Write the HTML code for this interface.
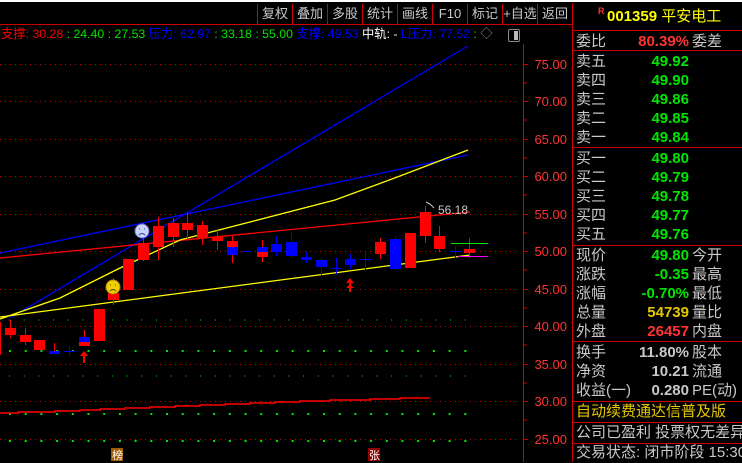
<!DOCTYPE html>
<html><head><meta charset="utf-8"><style>
body{margin:0;background:#000;width:742px;height:462px;overflow:hidden;position:relative;font-family:"Liberation Sans","Noto Sans CJK SC",sans-serif}
.a{position:absolute;white-space:nowrap}
.btn{position:absolute;top:4px;height:20px;width:34px;border-left:1px solid #c00;color:#c8c8c8;font-size:13px;line-height:20px;text-align:center}
.r{position:absolute;left:576px;width:166px;height:19px;font-size:15px;line-height:19px;color:#c8c8c8;white-space:nowrap;overflow:hidden}
.r .l{position:absolute;left:0}
.r .v{position:absolute;right:53px;font-weight:bold;font-family:"Liberation Sans","Noto Sans CJK SC",sans-serif;font-size:15px}
.r .l2{position:absolute;left:116px}
.hl{position:absolute;left:573px;width:169px;height:1px;background:#c00}
.g{color:#00e600}.rd{color:#ff3333}.y{color:#e6c800}
</style></head><body>
<svg width="742" height="462" style="position:absolute;left:0;top:0">
<rect x="0" y="0" width="742" height="2" fill="#fff"/>
<line x1="0" y1="24.5" x2="573" y2="24.5" stroke="#c00"/>
<line x1="572.5" y1="3" x2="572.5" y2="462" stroke="#c00"/>
<line x1="523.5" y1="44" x2="523.5" y2="462" stroke="#c00"/>
<g stroke="#c00" stroke-dasharray="1,4">
<line x1="0" y1="64.5" x2="520" y2="64.5"/><line x1="0" y1="101.5" x2="520" y2="101.5"/><line x1="0" y1="139.5" x2="520" y2="139.5"/><line x1="0" y1="176.5" x2="520" y2="176.5"/><line x1="0" y1="214.5" x2="520" y2="214.5"/><line x1="0" y1="251.5" x2="520" y2="251.5"/><line x1="0" y1="289.5" x2="520" y2="289.5"/><line x1="0" y1="326.5" x2="520" y2="326.5"/><line x1="0" y1="364.5" x2="520" y2="364.5"/><line x1="0" y1="401.5" x2="520" y2="401.5"/><line x1="0" y1="439.5" x2="520" y2="439.5"/>
</g>
<g stroke="#c00">
<line x1="523" y1="64.5" x2="528" y2="64.5"/><line x1="523" y1="83" x2="527" y2="83"/><line x1="523" y1="101.5" x2="528" y2="101.5"/><line x1="523" y1="120" x2="527" y2="120"/><line x1="523" y1="139.5" x2="528" y2="139.5"/><line x1="523" y1="158" x2="527" y2="158"/><line x1="523" y1="176.5" x2="528" y2="176.5"/><line x1="523" y1="195" x2="527" y2="195"/><line x1="523" y1="214.5" x2="528" y2="214.5"/><line x1="523" y1="233" x2="527" y2="233"/><line x1="523" y1="251.5" x2="528" y2="251.5"/><line x1="523" y1="270" x2="527" y2="270"/><line x1="523" y1="289.5" x2="528" y2="289.5"/><line x1="523" y1="308" x2="527" y2="308"/><line x1="523" y1="326.5" x2="528" y2="326.5"/><line x1="523" y1="345" x2="527" y2="345"/><line x1="523" y1="364.5" x2="528" y2="364.5"/><line x1="523" y1="383" x2="527" y2="383"/><line x1="523" y1="401.5" x2="528" y2="401.5"/><line x1="523" y1="420" x2="527" y2="420"/><line x1="523" y1="439.5" x2="528" y2="439.5"/>
</g>
<g fill="#ff3333" font-size="13" font-family="Liberation Sans,sans-serif" text-anchor="end">
<text x="567" y="69">75.00</text><text x="567" y="106">70.00</text><text x="567" y="144">65.00</text><text x="567" y="181">60.00</text><text x="567" y="219">55.00</text><text x="567" y="256">50.00</text><text x="567" y="294">45.00</text><text x="567" y="331">40.00</text><text x="567" y="369">35.00</text><text x="567" y="406">30.00</text><text x="567" y="444">25.00</text>
</g>
<g stroke="#00e600" stroke-width="2">
<line x1="9" y1="320" x2="470" y2="320" stroke-dasharray="1,13.7" stroke-width="1"/>
<line x1="9" y1="351" x2="470" y2="351" stroke-dasharray="2,13.7" stroke-width="2"/>
<line x1="9" y1="376" x2="470" y2="376" stroke-dasharray="1,13.7" stroke-width="1"/>
<line x1="9" y1="414" x2="470" y2="414" stroke-dasharray="2,13.7" stroke-width="2"/>
<line x1="9" y1="441" x2="470" y2="441" stroke-dasharray="2,13.7" stroke-width="2"/>
</g>
<polyline fill="none" stroke="#f00" stroke-width="1.5" points="0,413 18,413 18,412 55,412 55,411 80,411 80,410 100,410 100,409 125,409 125,408 150,408 150,407 175,407 175,406 200,406 200,405 225,405 225,404 250,404 250,403 275,403 275,402 300,402 300,401 330,401 330,400 370,400 370,399 400,399 400,398 430,398"/>
<line x1="10" y1="318" x2="468" y2="46" stroke="#0000ff" stroke-width="1.3"/>
<line x1="0" y1="253" x2="468" y2="155" stroke="#0000ff" stroke-width="1.3"/>
<line x1="0" y1="258" x2="470" y2="212" stroke="#f00" stroke-width="1.3"/>
<polyline fill="none" stroke="#ffff00" stroke-width="1.3" points="0,319 60,298 120,268 180,240 250,222 335,200 400,176 468,150"/>
<line x1="0" y1="317" x2="470" y2="255" stroke="#ffff00" stroke-width="1.3"/>
<g fill="#f00" stroke="#f00">
<line x1="0.5" y1="322" x2="0.5" y2="355"/>
<line x1="10.5" y1="320" x2="10.5" y2="338"/><rect x="5" y="328" width="11" height="7" stroke="none"/>
<line x1="25.5" y1="328" x2="25.5" y2="345"/><rect x="20" y="335" width="11" height="7" stroke="none"/>
<rect x="34" y="340" width="11" height="10" stroke="none"/>
<line x1="54.5" y1="343" x2="54.5" y2="354"/>
<line x1="84.5" y1="330" x2="84.5" y2="346"/><rect x="79" y="342" width="11" height="4" stroke="none"/>
<rect x="94" y="309" width="11" height="32" stroke="none"/>
<line x1="113.5" y1="278" x2="113.5" y2="305"/><rect x="108" y="293" width="11" height="7" stroke="none"/>
<rect x="123" y="259" width="11" height="31" stroke="none"/>
<line x1="143.5" y1="223" x2="143.5" y2="261"/><rect x="138" y="243" width="11" height="17" stroke="none"/>
<line x1="158.5" y1="217" x2="158.5" y2="260"/><rect x="153" y="226" width="11" height="21" stroke="none"/>
<line x1="173.5" y1="218" x2="173.5" y2="247"/><rect x="168" y="223" width="11" height="14" stroke="none"/>
<line x1="187.5" y1="213" x2="187.5" y2="241"/><rect x="182" y="223" width="11" height="7" stroke="none"/>
<line x1="202.5" y1="221" x2="202.5" y2="245"/><rect x="197" y="225" width="11" height="13" stroke="none"/>
<line x1="217.5" y1="230" x2="217.5" y2="250"/><rect x="212" y="237" width="11" height="4" stroke="none"/>
<line x1="232.5" y1="236" x2="232.5" y2="263"/><rect x="227" y="241" width="11" height="6" stroke="none"/>
<line x1="262.5" y1="240" x2="262.5" y2="262"/><rect x="257" y="252" width="11" height="5" stroke="none"/>
<line x1="380.5" y1="238" x2="380.5" y2="259"/><rect x="375" y="242" width="11" height="12" stroke="none"/>
<rect x="405" y="233" width="11" height="35" stroke="none"/>
<line x1="425.5" y1="206" x2="425.5" y2="243"/><rect x="420" y="212" width="11" height="24" stroke="none"/>
<line x1="439.5" y1="226" x2="439.5" y2="252"/><rect x="434" y="236" width="11" height="13" stroke="none"/>
<line x1="469.5" y1="238" x2="469.5" y2="258"/><rect x="464" y="249" width="11" height="4" stroke="none"/>
</g>
<g fill="#0000ff" stroke="#0000ff">
<rect x="49" y="351" width="11" height="3" stroke="none"/>
<line x1="64" y1="351.5" x2="75" y2="351.5"/><line x1="69.5" y1="346" x2="69.5" y2="356"/>
<rect x="79" y="337" width="11" height="5" stroke="none"/>
<rect x="227" y="247" width="11" height="8" stroke="none"/>
<line x1="242" y1="251.5" x2="251" y2="251.5"/>
<rect x="257" y="247" width="11" height="5" stroke="none"/>
<line x1="276.5" y1="236" x2="276.5" y2="256"/><rect x="271" y="244" width="11" height="8" stroke="none"/>
<line x1="291.5" y1="232" x2="291.5" y2="258"/><rect x="286" y="242" width="11" height="14" stroke="none"/>
<line x1="306.5" y1="252" x2="306.5" y2="263"/><rect x="301" y="257" width="11" height="3" stroke="none"/>
<line x1="321.5" y1="258" x2="321.5" y2="276"/><rect x="316" y="260" width="11" height="7" stroke="none"/>
<line x1="331" y1="268.5" x2="342" y2="268.5"/><line x1="336.5" y1="258" x2="336.5" y2="274"/>
<line x1="350.5" y1="254" x2="350.5" y2="269"/><rect x="345" y="259" width="11" height="6" stroke="none"/>
<line x1="360" y1="259.5" x2="371" y2="259.5"/><line x1="365.5" y1="252" x2="365.5" y2="270"/>
<line x1="395.5" y1="236" x2="395.5" y2="270"/><rect x="390" y="239" width="11" height="30" stroke="none"/>
<line x1="450" y1="251.5" x2="461" y2="251.5"/><line x1="455.5" y1="246" x2="455.5" y2="258"/>
</g>
<line x1="451" y1="243.5" x2="488" y2="243.5" stroke="#00e600"/>
<line x1="458" y1="256.5" x2="488" y2="256.5" stroke="#ff00ff"/>
<text x="438" y="214" fill="#c8c8c8" font-size="12" font-family="Liberation Sans,sans-serif">56.18</text>
<path d="M426 202 l4 2 l4 4" fill="none" stroke="#c8c8c8"/>
<path d="M84 351 l-4 5 h3 v7 h2 v-7 h3z" fill="#f00"/>
<path d="M350 278 l-4 5 h3 v2 l-3 3 h3 v4 h2 v-4 h3 l-3 -3 v-2 h3z" fill="#f00"/>
<circle cx="142" cy="231" r="7" fill="#c8d4ff" stroke="#6070c0"/>
<path d="M139 229 h1 M144 229 h1 M139 235 q3 -3 6 0" stroke="#304080" fill="none"/>
<circle cx="113" cy="287" r="7" fill="#f0d000" stroke="#b08000"/>
<path d="M110 285 h1 M115 285 h1 M110 291 q3 -3 6 0" stroke="#604000" fill="none"/>
<rect x="111" y="448" width="12" height="13" fill="#a05a00"/>
<rect x="368" y="448" width="12" height="13" fill="#900000"/>
</svg>
<div class="a" style="left:112px;top:447px;font-size:11px;color:#fff">榜</div>
<div class="a" style="left:369px;top:447px;font-size:11px;color:#fff">张</div>
<div class="btn" style="left:257px">复权</div><div class="btn" style="left:292px">叠加</div><div class="btn" style="left:327px">多股</div><div class="btn" style="left:362px">统计</div><div class="btn" style="left:397px">画线</div><div class="btn" style="left:432px">F10</div><div class="btn" style="left:467px">标记</div><div class="btn" style="left:502px">+自选</div><div class="btn" style="left:537px">返回</div>
<div class="a" style="left:1px;top:26px;font-size:12.3px;line-height:16px"><span style="color:#f00">支撑: 30.28</span><span class="g"> : 24.40 : 27.53 </span><span style="color:#0000ff">压力: 62.97</span><span class="g"> : 33.18 : 55.00 </span><span style="color:#0000ff">支撑: 49.53 </span><span style="color:#fff">中轨: - </span><span style="color:#0000ff">L压力: 77.52</span><span class="g"> : </span><span style="color:#888">◇</span></div>
<div class="a" style="left:508px;top:29px;width:10px;height:11px;border:1px solid #888;border-radius:2px"><div style="position:absolute;right:1px;top:1px;width:4px;height:9px;background:#bbb"></div></div>
<div class="a" style="left:598px;top:6px;font-size:9px;font-weight:bold;color:#f33">R</div>
<div class="a" style="left:607px;top:7px;font-size:15px;font-weight:bold;color:#ff0;line-height:20px">001359 <span style="font-weight:normal">平安电工</span></div>
<div class="hl" style="top:30px"></div>
<div class="r" style="top:32px"><span class="l">委比</span><span class="v rd" style="right:53px">80.39%</span><span class="l2">委差</span></div>
<div class="hl" style="top:50px"></div>
<div class="r" style="top:52px"><span class="l">卖五</span><span class="v g">49.92</span></div>
<div class="r" style="top:71px"><span class="l">卖四</span><span class="v g">49.90</span></div>
<div class="r" style="top:90px"><span class="l">卖三</span><span class="v g">49.86</span></div>
<div class="r" style="top:109px"><span class="l">卖二</span><span class="v g">49.85</span></div>
<div class="r" style="top:128px"><span class="l">卖一</span><span class="v g">49.84</span></div>
<div class="hl" style="top:147px"></div>
<div class="r" style="top:149px"><span class="l">买一</span><span class="v g">49.80</span></div>
<div class="r" style="top:168px"><span class="l">买二</span><span class="v g">49.79</span></div>
<div class="r" style="top:187px"><span class="l">买三</span><span class="v g">49.78</span></div>
<div class="r" style="top:206px"><span class="l">买四</span><span class="v g">49.77</span></div>
<div class="r" style="top:225px"><span class="l">买五</span><span class="v g">49.76</span></div>
<div class="hl" style="top:245px"></div>
<div class="r" style="top:246px"><span class="l">现价</span><span class="v g">49.80</span><span class="l2">今开</span></div>
<div class="r" style="top:265px"><span class="l">涨跌</span><span class="v g">-0.35</span><span class="l2">最高</span></div>
<div class="r" style="top:284px"><span class="l">涨幅</span><span class="v g">-0.70%</span><span class="l2">最低</span></div>
<div class="r" style="top:303px"><span class="l">总量</span><span class="v y">54739</span><span class="l2">量比</span></div>
<div class="r" style="top:322px"><span class="l">外盘</span><span class="v rd">26457</span><span class="l2">内盘</span></div>
<div class="hl" style="top:341px"></div>
<div class="r" style="top:343px"><span class="l">换手</span><span class="v">11.80%</span><span class="l2">股本</span></div>
<div class="r" style="top:362px"><span class="l">净资</span><span class="v">10.21</span><span class="l2">流通</span></div>
<div class="r" style="top:381px"><span class="l">收益(一)</span><span class="v">0.280</span><span class="l2">PE(动)</span></div>
<div class="hl" style="top:401px"></div>
<div class="r y" style="top:402px">自动续费通达信普及版</div>
<div class="hl" style="top:422px"></div>
<div class="r" style="top:423px">公司已盈利 投票权无差异</div>
<div class="hl" style="top:443px"></div>
<div class="r" style="top:443px">交易状态: 闭市阶段 15:30</div>
</body></html>
